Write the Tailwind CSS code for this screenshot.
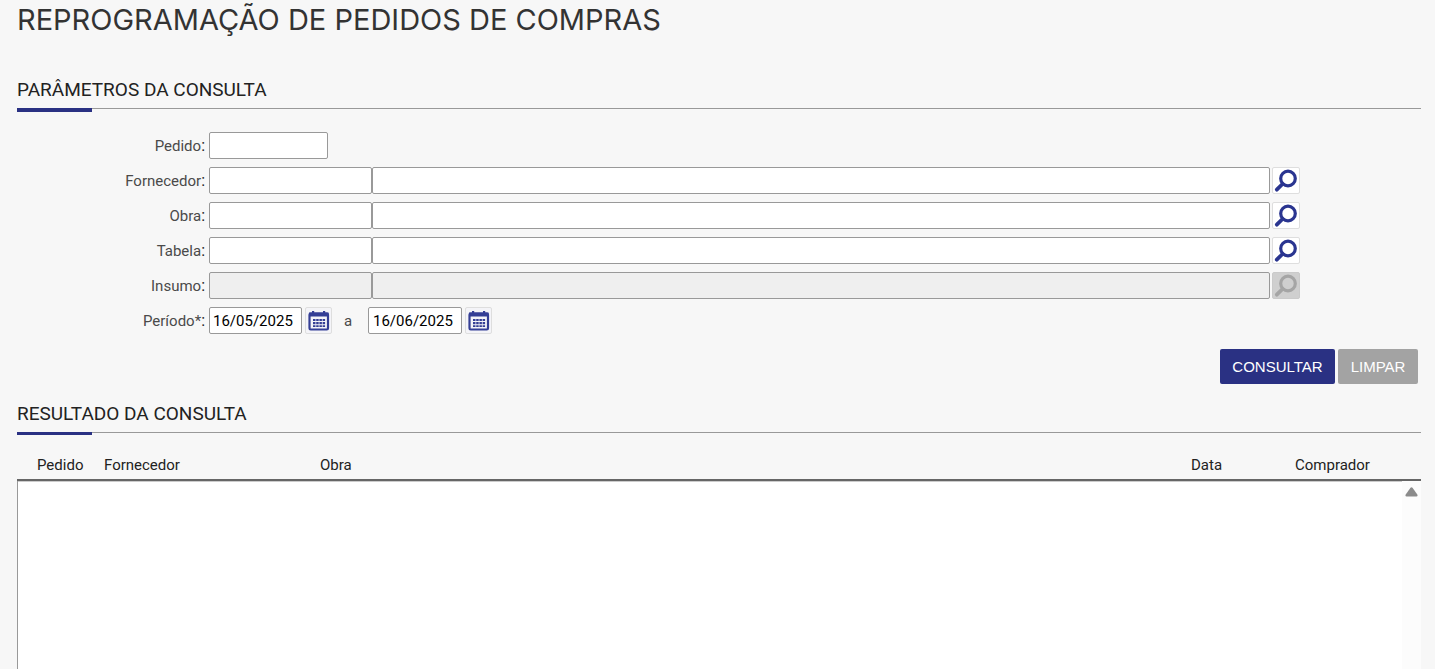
<!DOCTYPE html>
<html lang="pt-BR">
<head>
<meta charset="utf-8">
<meta name="viewport" content="width=device-width, initial-scale=1">
<title>Reprogramação de Pedidos de Compras</title>
<script src="https://cdn.jsdelivr.net/npm/@tailwindcss/browser@4"></script>
</head>
<body class="bg-[#f7f7f7] font-[Roboto,sans-serif] text-[15px] leading-5 text-[#4a4a4a]">
<svg class="hidden" aria-hidden="true">
  <symbol id="lupa" viewBox="0 0 28 27">
    <circle cx="16" cy="11.500" r="7.300" fill="none" stroke="currentColor" stroke-width="3.200"/>
    <path d="M10.500 17 4.800 22.700" stroke="currentColor" stroke-width="3.800" stroke-linecap="round"/>
  </symbol>
  <symbol id="calendario" viewBox="0 0 27 27">
    <rect x="4.500" y="6.500" width="18.500" height="16" rx="1.200" fill="none" stroke="currentColor" stroke-width="2.200"/>
    <path d="M4 5.500h19.500v4H4zM7 4h2.200v2H7zM18 4h2.200v2H18z" fill="currentColor"/>
    <path d="M8 12h2.500v2H8zM11.200 12h2.500v2h-2.500zM14.400 12h2.500v2h-2.500zM17.600 12h2.500v2h-2.500zM8 15h2.500v2.200H8zM11.200 15h2.500v2.200h-2.500zM14.400 15h2.500v2.200h-2.500zM17.600 15h2.500v2.200h-2.500zM8 18.200h2.500v1.800H8zM11.200 18.200h2.500v1.800h-2.500zM14.400 18.200h2.500v1.800h-2.500zM17.600 18.200h2.500v1.800h-2.500z" fill="currentColor"/>
  </symbol>
</svg>
<main class="flex min-h-screen flex-col pr-[14px] pl-[17px]">
  <h1 class="font-[Inter,sans-serif] text-[29px] leading-10 text-[#333]">REPROGRAMAÇÃO DE PEDIDOS DE COMPRAS</h1>

  <section class="pt-[37px]">
    <h2 class="flex h-8 items-start border-b border-[#999] pt-px text-[19px] leading-6 text-[#222]">PARÂMETROS DA CONSULTA</h2>
    <div class="-mt-px h-1 w-[75px] bg-[#2a3183]"></div>

    <form class="pt-5">
      <div class="grid grid-cols-[188px_1fr] gap-x-1 gap-y-2">
        <label for="pedido" class="pt-1 text-right">Pedido<span class="text-base leading-5 text-[#222]">:</span></label>
        <div class="flex h-[27px]"><input id="pedido" class="w-[119px] rounded-xs border border-[#999] bg-white px-1"></div>

        <label for="fornecedor" class="pt-1 text-right">Fornecedor<span class="text-base leading-5 text-[#222]">:</span></label>
        <div class="mr-[121px] flex h-[27px]">
          <input id="fornecedor" class="w-[163px] rounded-xs border border-[#999] bg-white px-1">
          <input aria-label="Nome do fornecedor" class="min-w-0 flex-1 rounded-xs border border-[#999] bg-white px-1">
          <button type="button" aria-label="Pesquisar fornecedor" class="ml-0.5 w-7 rounded-xs border border-[#dedede] bg-white text-[#2a3590]"><svg class="-m-px h-[27px] w-7"><use href="#lupa"/></svg></button>
        </div>

        <label for="obra" class="pt-1 text-right">Obra<span class="text-base leading-5 text-[#222]">:</span></label>
        <div class="mr-[121px] flex h-[27px]">
          <input id="obra" class="w-[163px] rounded-xs border border-[#999] bg-white px-1">
          <input aria-label="Nome da obra" class="min-w-0 flex-1 rounded-xs border border-[#999] bg-white px-1">
          <button type="button" aria-label="Pesquisar obra" class="ml-0.5 w-7 rounded-xs border border-[#dedede] bg-white text-[#2a3590]"><svg class="-m-px h-[27px] w-7"><use href="#lupa"/></svg></button>
        </div>

        <label for="tabela" class="pt-1 text-right">Tabela<span class="text-base leading-5 text-[#222]">:</span></label>
        <div class="mr-[121px] flex h-[27px]">
          <input id="tabela" class="w-[163px] rounded-xs border border-[#999] bg-white px-1">
          <input aria-label="Nome da tabela" class="min-w-0 flex-1 rounded-xs border border-[#999] bg-white px-1">
          <button type="button" aria-label="Pesquisar tabela" class="ml-0.5 w-7 rounded-xs border border-[#dedede] bg-white text-[#2a3590]"><svg class="-m-px h-[27px] w-7"><use href="#lupa"/></svg></button>
        </div>

        <label for="insumo" class="pt-1 text-right">Insumo<span class="text-base leading-5 text-[#222]">:</span></label>
        <div class="mr-[121px] flex h-[27px]">
          <input id="insumo" disabled class="w-[163px] rounded-xs border border-[#999] bg-[#efefef] px-1">
          <input aria-label="Nome do insumo" disabled class="min-w-0 flex-1 rounded-xs border border-[#999] bg-[#efefef] px-1">
          <button type="button" disabled aria-label="Pesquisar insumo" class="ml-0.5 w-7 rounded-xs border border-[#cacaca] bg-[#cfcfcf] text-[#a5a5a5]"><svg class="-m-px h-[27px] w-7"><use href="#lupa"/></svg></button>
        </div>

        <label for="inicio" class="pt-1 text-right">Período*<span class="text-base leading-5 text-[#222]">:</span></label>
        <div class="flex h-[27px]">
          <input id="inicio" value="16/05/2025" class="w-[93px] rounded-xs border border-[#999] bg-white px-[3px] text-[15px] text-black">
          <button type="button" aria-label="Escolher data inicial" class="ml-[3px] w-[27px] rounded-xs border border-[#dedede] bg-[#f4f4f8] text-[#343e95]"><svg class="-m-px size-[27px]"><use href="#calendario"/></svg></button>
          <label for="fim" class="w-9 pt-1 pr-1 text-center">a</label>
          <input id="fim" value="16/06/2025" class="w-[94px] rounded-xs border border-[#999] bg-white px-1 text-[15px] text-black">
          <button type="button" aria-label="Escolher data final" class="ml-[3px] w-[27px] rounded-xs border border-[#dedede] bg-[#f4f4f8] text-[#343e95]"><svg class="-m-px size-[27px]"><use href="#calendario"/></svg></button>
        </div>
      </div>
      <div class="mt-[15px] flex justify-end gap-[3px] pr-[3px] font-['Liberation_Sans',Arial,sans-serif] text-[15px] text-white">
        <button type="submit" class="h-[35px] w-[115px] rounded-xs bg-[#2a3183]">CONSULTAR</button>
        <button type="reset" class="h-[35px] w-20 rounded-xs bg-[#a3a3a3]">LIMPAR</button>
      </div>
    </form>
  </section>

  <section class="flex flex-1 flex-col pt-[17px]">
    <h2 class="flex h-8 items-start border-b border-[#999] pt-px text-[19px] leading-6 text-[#222]">RESULTADO DA CONSULTA</h2>
    <div class="-mt-px h-[3px] w-[75px] bg-[#2a3183]"></div>
    <table class="mt-[18px] w-full table-fixed border-b-2 border-[#666] text-left text-[#222]">
      <thead>
        <tr class="h-[27px] align-top">
          <th scope="col" class="w-[87px] pt-0.5 pl-5 font-normal">Pedido</th>
          <th scope="col" class="w-[216px] pt-0.5 font-normal">Fornecedor</th>
          <th scope="col" class="pt-0.5 font-normal">Obra</th>
          <th scope="col" class="w-[104px] pt-0.5 font-normal">Data</th>
          <th scope="col" class="w-[126px] pt-0.5 font-normal">Comprador</th>
        </tr>
      </thead>
    </table>
    <div class="flex flex-1 justify-end border-l border-[#999] bg-white">
      <div class="flex-1 border-t border-[#ccc]"></div>
      <div class="flex w-[19px] justify-center bg-[#fcfcfc] pt-1.5">
        <svg class="h-[10px] w-[13px] text-[#8b8b8b]" viewBox="0 0 13 10"><path d="M5.500.8 Q6.500-.3 7.500.8 L12.300 7.500 Q13.200 9.500 11.300 9.500 H1.700 Q-.2 9.500 .7 7.500Z" fill="currentColor"/></svg>
      </div>
    </div>
  </section>
</main>
</body>
</html>
